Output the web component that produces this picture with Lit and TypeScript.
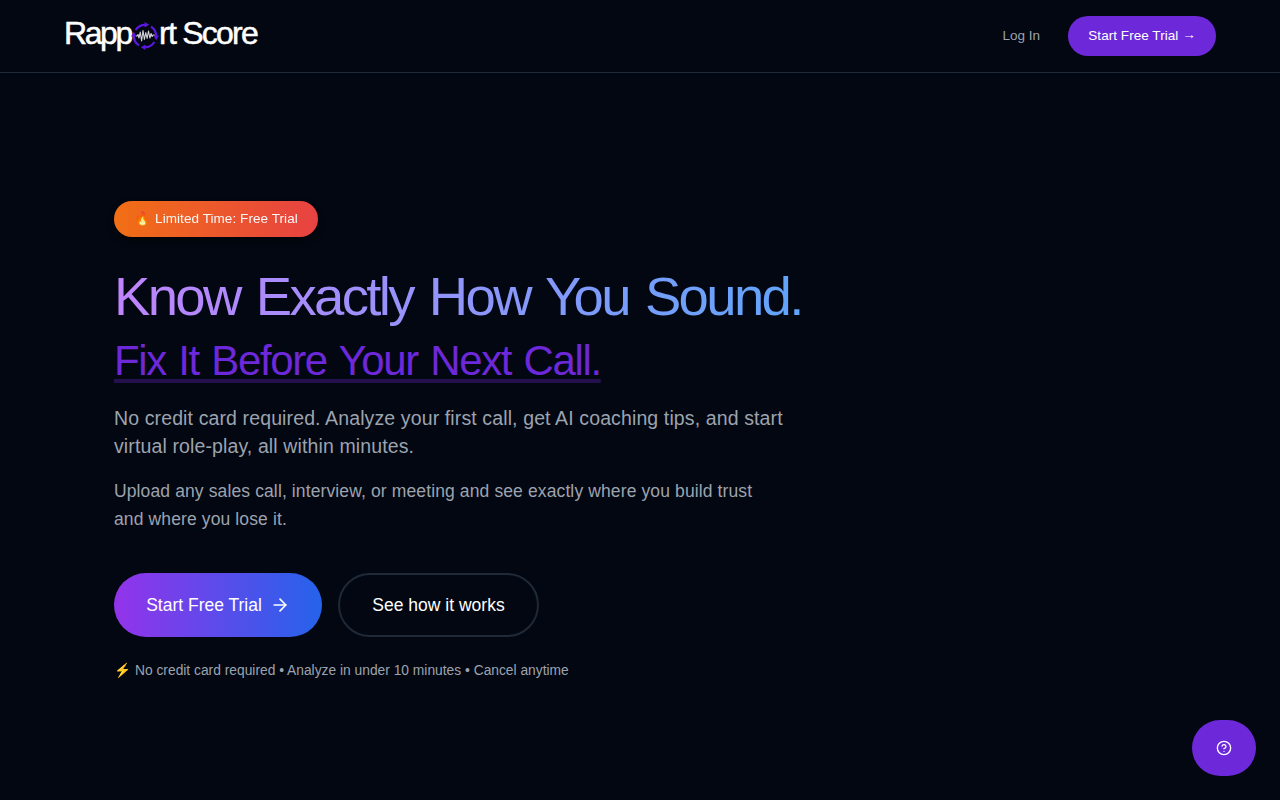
import { LitElement, css, html, svg } from 'lit';

const arc = (angle: number) => svg`
    <g transform="rotate(${angle} 14 14)">
        <path d="M4.6 8 A11.2 11.2 0 0 1 14.5 2.8" fill="none" stroke="#5a17e0" stroke-width="2.3" />
        <path d="M13.6 0 L18.2 2.8 L13.6 5.6 Z" fill="#5a17e0" />
    </g>
`;

class RsLogo extends LitElement {
    static styles = css`
        :host {
            display: flex;
            align-items: center;
            height: 40px;
            color: #fff;
            font-size: 32px;
            line-height: 34px;
            -webkit-text-stroke: 0.5px #fff;
            white-space: pre;
        }

        .start,
        .end {
            padding-bottom: 6px;
        }

        .start {
            width: 67px;
            letter-spacing: -2.4px;
        }

        .end {
            letter-spacing: -1.75px;
        }

        .mark {
            flex: none;
            width: 28px;
            height: 28px;
        }
    `;

    render() {
        return html`
            <span class="start">Rapp</span>
            <svg class="mark" viewBox="0 0 28 28" aria-hidden="true">
                ${[0, 90, 180, 270].map(arc)}
                <path
                    d="M5 14h1l1-1.5 1 3.5 1.2-6 1.4 9 1.4-10.5 1.4 9 1.4-7 1.3 6 1.4-7.5 1.4 7 1.2-4.5 1 3 1-1.5h1.6"
                    fill="none"
                    stroke="#d5d5dc"
                    stroke-width="1.1"
                    stroke-linejoin="round"
                />
            </svg>
            <span class="end">rt Score</span>
        `;
    }
}

customElements.define('rs-logo', RsLogo);

class AppRoot extends LitElement {
    static styles = css`
        :host {
            --primary: #6d28d9;
            --muted: #9ca3af;
            --line: #1f2937;

            display: flex;
            flex-direction: column;
            height: 100vh;
            background: #030711;
            color: #fff;
            font-family: 'Liberation Sans', Arial, sans-serif;
        }

        * {
            box-sizing: border-box;
        }

        a {
            color: inherit;
            text-decoration: none;
        }

        h1,
        p {
            margin: 0;
        }

        button {
            border: 0;
            padding: 0;
            color: inherit;
            font: inherit;
            cursor: pointer;
        }

        .header {
            display: flex;
            flex: none;
            align-items: center;
            justify-content: space-between;
            height: 73px;
            padding: 0 64px;
            border-bottom: 1px solid var(--line);
        }

        .nav {
            display: flex;
            align-items: center;
            gap: 28px;
            font-size: 13.5px;
        }

        .login {
            padding-bottom: 2px;
            color: var(--muted);
        }

        .nav-cta {
            display: flex;
            align-items: center;
            justify-content: center;
            width: 148px;
            height: 40px;
            padding-bottom: 2px;
            border-radius: 20px;
            background: var(--primary);
            letter-spacing: 0.05px;
            white-space: pre;
        }

        .arrow {
            font-family: 'Liberation Serif', serif;
        }

        .hero {
            display: flex;
            flex-direction: column;
            align-items: flex-start;
            padding: 128px 114px 0;
            white-space: nowrap;
        }

        .badge {
            display: flex;
            align-items: center;
            gap: 4px;
            width: 204px;
            height: 36px;
            padding: 0 20px 2px;
            border-radius: 18px;
            background: linear-gradient(to right, #f97316, #ef4444);
            box-shadow: 0 4px 8px rgba(0, 0, 0, 0.4);
            font-size: 13.5px;
            letter-spacing: 0.07px;
            opacity: 0.97;
        }

        .title {
            display: flex;
            flex-direction: column;
            align-items: flex-start;
            padding-top: 25px;
            font-weight: 400;
        }

        .lead {
            background: linear-gradient(to right, #c084fc, #60a5fa);
            background-clip: text;
            -webkit-background-clip: text;
            color: transparent;
            font-size: 54.5px;
            line-height: 70px;
            letter-spacing: -2.65px;
            word-spacing: 3.5px;
        }

        .fix {
            margin-top: -1px;
            color: var(--primary);
            font-size: 42px;
            line-height: 60px;
            letter-spacing: -1.35px;
            word-spacing: 2px;
            text-decoration: underline;
            text-decoration-color: rgba(109, 40, 217, 0.3);
            text-decoration-thickness: 4px;
            text-decoration-skip-ink: none;
            text-underline-offset: 4px;
        }

        .offer {
            padding-top: 13px;
            color: var(--muted);
            font-size: 19.5px;
            line-height: 28px;
            letter-spacing: 0.12px;
        }

        .pitch {
            padding-top: 17px;
            color: var(--muted);
            font-size: 17.5px;
            line-height: 28px;
            letter-spacing: 0.12px;
        }

        .actions {
            display: flex;
            gap: 16px;
            padding-top: 40px;
            font-size: 17.5px;
        }

        .primary,
        .secondary {
            display: flex;
            align-items: center;
            justify-content: center;
            height: 64px;
            border-radius: 32px;
        }

        .primary {
            gap: 8px;
            width: 208px;
            background: linear-gradient(to right, #9333ea, #2563eb);
        }

        .secondary {
            width: 201px;
            border: 2px solid var(--line);
        }

        .note {
            display: flex;
            align-items: center;
            gap: 4px;
            padding-top: 24px;
            color: var(--muted);
            font-size: 13.8px;
            line-height: 20px;
        }

        .icon {
            fill: none;
            stroke: currentColor;
            stroke-width: 2;
            stroke-linecap: round;
            stroke-linejoin: round;
        }

        .help {
            position: fixed;
            right: 24px;
            bottom: 24px;
            display: grid;
            place-items: center;
            width: 64px;
            height: 56px;
            border-radius: 28px;
            background: var(--primary);
        }
    `;

    render() {
        return html`
            <header class="header">
                <rs-logo role="img" aria-label="Rapport Score"></rs-logo>
                <nav class="nav">
                    <a class="login" href="#">Log In</a>
                    <a class="nav-cta" href="#">Start Free Trial <span class="arrow">→</span></a>
                </nav>
            </header>
            <main class="hero">
                <div class="badge"><span>🔥</span><span>Limited Time: Free Trial</span></div>
                <h1 class="title">
                    <span class="lead">Know Exactly How You Sound.</span>
                    <span class="fix">Fix It Before Your Next Call.</span>
                </h1>
                <p class="offer">
                    No credit card required. Analyze your first call, get AI coaching tips, and start<br />
                    virtual role-play, all within minutes.
                </p>
                <p class="pitch">
                    Upload any sales call, interview, or meeting and see exactly where you build trust<br />
                    and where you lose it.
                </p>
                <div class="actions">
                    <a class="primary" href="#">
                        Start Free Trial
                        <svg class="icon" width="20" height="20" viewBox="0 0 24 24" aria-hidden="true">
                            <path d="M5 12h14" />
                            <path d="m12 5 7 7-7 7" />
                        </svg>
                    </a>
                    <a class="secondary" href="#">See how it works</a>
                </div>
                <p class="note">
                    <span>⚡</span>
                    <span>No credit card required • Analyze in under 10 minutes • Cancel anytime</span>
                </p>
            </main>
            <button class="help" type="button" aria-label="Help">
                <svg class="icon" width="16" height="16" viewBox="0 0 24 24" aria-hidden="true">
                    <circle cx="12" cy="12" r="10" />
                    <path d="M9.09 9a3 3 0 0 1 5.83 1c0 2-3 3-3 3" />
                    <path d="M12 17h.01" />
                </svg>
            </button>
        `;
    }
}

customElements.define('app-root', AppRoot);
